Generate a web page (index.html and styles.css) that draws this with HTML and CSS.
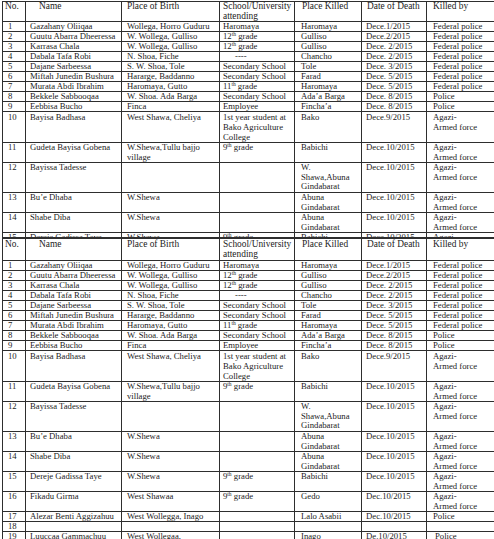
FILE: index.html
```html
<!DOCTYPE html>
<html>
<head>
<meta charset="utf-8">
<link rel="stylesheet" href="styles.css">
</head>
<body>
<div class="page">
  <div class="clip">
    <table class="grid first">
      <colgroup><col class="w1"><col class="w2"><col class="w3"><col class="w4"><col class="w5"><col class="w6"><col class="w7"></colgroup>
      <tr class="head">
        <th>No.</th><th>Name</th><th>Place of Birth</th><th>School/University<br>attending</th><th>Place Killed</th><th>Date of Death</th><th>Killed by</th>
      </tr>
      <tr><td>1</td><td>Gazahany Oliiqaa</td><td>Wollega, Horro Guduru</td><td>Haromaya</td><td>Haromaya</td><td>Dece.1/2015</td><td>Federal police</td></tr>
      <tr><td>2</td><td>Guutu Abarra Dheeressa</td><td>W. Wollega, Gulliso</td><td>12<sup>th</sup> grade</td><td>Gulliso</td><td>Dece.2/2015</td><td>Federal police</td></tr>
      <tr><td>3</td><td>Karrasa Chala</td><td>W. Wollega, Gulliso</td><td>12<sup>th</sup> grade</td><td>Gulliso</td><td>Dece. 2/2015</td><td>Federal police</td></tr>
      <tr><td>4</td><td>Dabala Tafa Robi</td><td>N. Shoa, Fiche</td><td><span class="dash">----</span></td><td>Chancho</td><td>Dece. 2/2015</td><td>Federal police</td></tr>
      <tr><td>5</td><td>Dajane Sarbeessa</td><td>S. W. Shoa, Tole</td><td>Secondary School</td><td>Tole</td><td>Dece. 3/2015</td><td>Federal police</td></tr>
      <tr><td>6</td><td>Miftah Junedin Bushura</td><td>Hararge, Baddanno</td><td>Secondary School</td><td>Farad</td><td>Dece. 5/2015</td><td>Federal police</td></tr>
      <tr><td>7</td><td>Murata Abdi Ibrahim</td><td>Haromaya, Gutto</td><td>11<sup>th</sup> grade</td><td>Haromaya</td><td>Dece. 5/2015</td><td>Federal police</td></tr>
      <tr><td>8</td><td>Bekkele Sabbooqaa</td><td>W. Shoa. Ada Barga</td><td>Secondary School</td><td>Ada’a Barga</td><td>Dece. 8/2015</td><td>Police</td></tr>
      <tr><td>9</td><td>Eebbisa Bucho</td><td>Finca</td><td>Employee</td><td>Fincha’a</td><td>Dece. 8/2015</td><td>Police</td></tr>
      <tr class="r3"><td>10</td><td>Bayisa Badhasa</td><td>West Shawa, Cheliya</td><td>1st year student at<br>Bako Agriculture<br>College</td><td>Bako</td><td>Dece.9/2015</td><td>Agazi-<br>Armed force</td></tr>
      <tr class="r2"><td>11</td><td>Gudeta Bayisa Gobena</td><td>W.Shewa,Tullu bajjo<br>village</td><td>9<sup>th</sup> grade</td><td>Babichi</td><td>Dece.10/2015</td><td>Agazi-<br>Armed force</td></tr>
      <tr class="r3b"><td>12</td><td>Bayissa Tadesse</td><td></td><td></td><td>W.<br>Shawa,Abuna<br>Gindabarat</td><td>Dece.10/2015</td><td>Agazi-<br>Armed force</td></tr>
      <tr class="r2"><td>13</td><td>Bu’e Dhaba</td><td>W.Shewa</td><td></td><td>Abuna<br>Gindabarat</td><td>Dece.10/2015</td><td>Agazi-<br>Armed force</td></tr>
      <tr class="r2"><td>14</td><td>Shabe Diba</td><td>W.Shewa</td><td></td><td>Abuna<br>Gindabarat</td><td>Dece.10/2015</td><td>Agazi-<br>Armed force</td></tr>
      <tr class="r2"><td>15</td><td>Dereje Gadissa Taye</td><td>W.Shewa</td><td>9<sup>th</sup> grade</td><td>Babichi</td><td>Dece.10/2015</td><td>Agazi-<br>Armed force</td></tr>
    </table>
  </div>
  <table class="grid second">
    <colgroup><col class="w1"><col class="w2"><col class="w3"><col class="w4"><col class="w5"><col class="w6"><col class="w7"></colgroup>
    <tr class="head">
      <th>No.</th><th>Name</th><th>Place of Birth</th><th>School/University<br>attending</th><th>Place Killed</th><th>Date of Death</th><th>Killed by</th>
    </tr>
    <tr><td>1</td><td>Gazahany Oliiqaa</td><td>Wollega, Horro Guduru</td><td>Haromaya</td><td>Haromaya</td><td>Dece.1/2015</td><td>Federal police</td></tr>
    <tr><td>2</td><td>Guutu Abarra Dheeressa</td><td>W. Wollega, Gulliso</td><td>12<sup>th</sup> grade</td><td>Gulliso</td><td>Dece.2/2015</td><td>Federal police</td></tr>
    <tr><td>3</td><td>Karrasa Chala</td><td>W. Wollega, Gulliso</td><td>12<sup>th</sup> grade</td><td>Gulliso</td><td>Dece. 2/2015</td><td>Federal police</td></tr>
    <tr><td>4</td><td>Dabala Tafa Robi</td><td>N. Shoa, Fiche</td><td><span class="dash">----</span></td><td>Chancho</td><td>Dece. 2/2015</td><td>Federal police</td></tr>
    <tr><td>5</td><td>Dajane Sarbeessa</td><td>S. W. Shoa, Tole</td><td>Secondary School</td><td>Tole</td><td>Dece. 3/2015</td><td>Federal police</td></tr>
    <tr><td>6</td><td>Miftah Junedin Bushura</td><td>Hararge, Baddanno</td><td>Secondary School</td><td>Farad</td><td>Dece. 5/2015</td><td>Federal police</td></tr>
    <tr><td>7</td><td>Murata Abdi Ibrahim</td><td>Haromaya, Gutto</td><td>11<sup>th</sup> grade</td><td>Haromaya</td><td>Dece. 5/2015</td><td>Federal police</td></tr>
    <tr><td>8</td><td>Bekkele Sabbooqaa</td><td>W. Shoa. Ada Barga</td><td>Secondary School</td><td>Ada’a Barga</td><td>Dece. 8/2015</td><td>Police</td></tr>
    <tr><td>9</td><td>Eebbisa Bucho</td><td>Finca</td><td>Employee</td><td>Fincha’a</td><td>Dece. 8/2015</td><td>Police</td></tr>
    <tr class="r3"><td>10</td><td>Bayisa Badhasa</td><td>West Shawa, Cheliya</td><td>1st year student at<br>Bako Agriculture<br>College</td><td>Bako</td><td>Dece.9/2015</td><td>Agazi-<br>Armed force</td></tr>
    <tr class="r2"><td>11</td><td>Gudeta Bayisa Gobena</td><td>W.Shewa,Tullu bajjo<br>village</td><td>9<sup>th</sup> grade</td><td>Babichi</td><td>Dece.10/2015</td><td>Agazi-<br>Armed force</td></tr>
    <tr class="r3b"><td>12</td><td>Bayissa Tadesse</td><td></td><td></td><td>W.<br>Shawa,Abuna<br>Gindabarat</td><td>Dece.10/2015</td><td>Agazi-<br>Armed force</td></tr>
    <tr class="r2"><td>13</td><td>Bu’e Dhaba</td><td>W.Shewa</td><td></td><td>Abuna<br>Gindabarat</td><td>Dece.10/2015</td><td>Agazi-<br>Armed force</td></tr>
    <tr class="r2"><td>14</td><td>Shabe Diba</td><td>W.Shewa</td><td></td><td>Abuna<br>Gindabarat</td><td>Dece.10/2015</td><td>Agazi-<br>Armed force</td></tr>
    <tr class="r2"><td>15</td><td>Dereje Gadissa Taye</td><td>W.Shewa</td><td>9<sup>th</sup> grade</td><td>Babichi</td><td>Dece.10/2015</td><td>Agazi-<br>Armed force</td></tr>
    <tr class="r2"><td>16</td><td>Fikadu Girma</td><td>West Shawaa</td><td>9<sup>th</sup> grade</td><td>Gedo</td><td>Dec.10/2015</td><td>Agazi-<br>Armed force</td></tr>
    <tr><td>17</td><td>Alezar Benti Aggizahuu</td><td>West Wollegga, Inago</td><td></td><td>Lalo Asabii</td><td>Dec.10/2015</td><td>Police</td></tr>
    <tr><td>18</td><td>&nbsp;</td><td>&nbsp;</td><td>&nbsp;</td><td>&nbsp;</td><td>&nbsp;</td><td>&nbsp;</td></tr>
    <tr class="r2"><td>19</td><td>Luuccaa Gammachuu</td><td>West Wollegaa,<br>Inago</td><td></td><td>Inago</td><td>De.10/2015</td><td><span class="ind">Police</span></td></tr>
  </table>
</div>
</body>
</html>
```

FILE: styles.css
```css
html, body {
  margin: 0;
  padding: 0;
  background: #ffffff;
  height: 539px;
  overflow: hidden;
}

.page {
  padding-left: 2px;
  font-family: "Liberation Serif", "Times New Roman", serif;
  color: #1c1c1c;
}

.clip {
  height: 237px;
  overflow: hidden;
  padding-top: 1px;
  box-sizing: border-box;
}

.grid {
  border-collapse: collapse;
  table-layout: fixed;
  width: 492px;
}

.w1 { width: 23px; }
.w2 { width: 96px; }
.w3 { width: 98px; }
.w4 { width: 75px; }
.w5 { width: 67px; }
.w6 { width: 65px; }
.w7 { width: 68px; }

.grid th,
.grid td {
  border: 1px solid #2e2e2e;
  padding: 0;
  vertical-align: top;
  text-align: left;
  white-space: nowrap;
  overflow: hidden;
  font-weight: normal;
}

.grid th {
  font-size: 9.4px;
  line-height: 9.5px;
}

.grid td {
  font-size: 8.7px;
  line-height: 9px;
}

.second {
  border-top: 2px solid #2e2e2e;
}

.second th {
  line-height: 10px;
  padding-bottom: 1px;
}

.second .head th {
  border-top: 2px solid #2e2e2e;
}

.grid tr.r2 td { line-height: 9.5px; }
.grid tr.r3 td { line-height: 10px; }
.grid tr.r3b td { line-height: 9.67px; }

.grid th:nth-child(1) { padding-left: 2px; }
.grid th:nth-child(2) { padding-left: 13px; }
.grid th:nth-child(3) { padding-left: 5px; }
.grid th:nth-child(4) { padding-left: 3px; }
.grid th:nth-child(5) { padding-left: 7px; }
.grid th:nth-child(6) { padding-left: 5px; }
.grid th:nth-child(7) { padding-left: 6px; }

.grid td:nth-child(1) { padding-left: 5px; }
.grid td:nth-child(2) { padding-left: 4px; }
.grid td:nth-child(3) { padding-left: 5px; }
.grid td:nth-child(4) { padding-left: 3px; }
.grid td:nth-child(5) { padding-left: 6px; }
.grid td:nth-child(6) { padding-left: 4px; }
.grid td:nth-child(7) { padding-left: 6px; }

sup {
  font-size: 5.5px;
  line-height: 0;
  vertical-align: 3px;
}

.dash {
  padding-left: 12px;
}

.ind {
  padding-left: 2px;
}
```
